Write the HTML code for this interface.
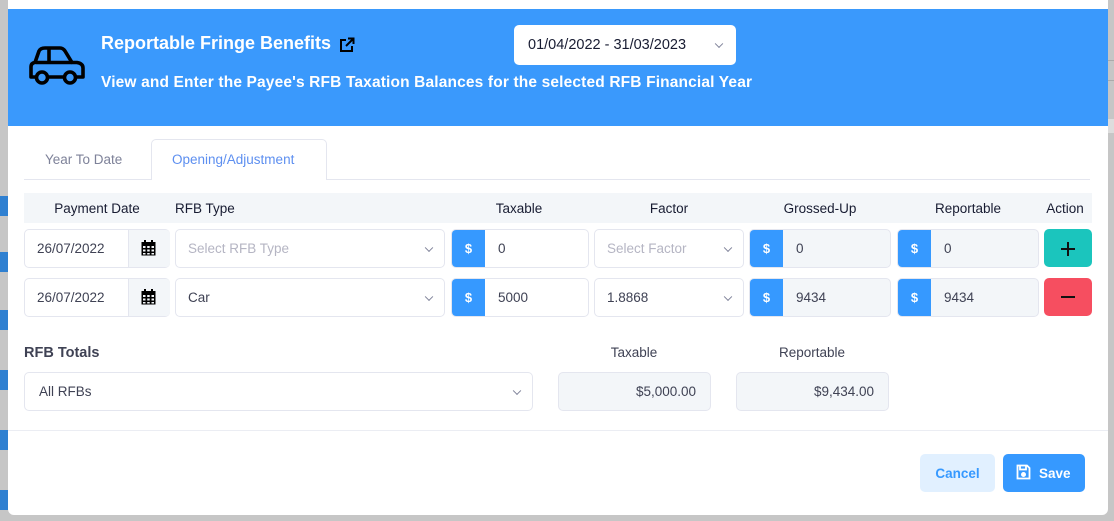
<!DOCTYPE html>
<html><head><meta charset="utf-8"><style>
*{box-sizing:border-box;margin:0;padding:0}
body{width:1114px;height:521px;overflow:hidden;background:#c6c6c6;font-family:"Liberation Sans",sans-serif;position:relative;color:#3f4254}
.a{position:absolute}
.modal{left:8px;top:0;width:1100px;height:515px;background:#fff;border-radius:0 0 6px 6px;overflow:hidden}
.hdr{left:8px;top:9px;width:1100px;height:117px;background:#3a99fc}
.inp{position:absolute;border:1px solid #e4e6ef;border-radius:5px;background:#fff;font-size:13.5px;display:flex;align-items:center;padding-left:12px;color:#3f4254}
.ph{color:#b5b5c3}
.chev{position:absolute;right:12px;top:50%;width:6px;height:6px;border-right:1.3px solid #7e8299;border-bottom:1.3px solid #7e8299;transform:translateY(-70%) rotate(45deg)}
.add{position:absolute;left:0;top:0;bottom:0;width:33px;background:#3699ff;color:#fff;font-size:13px;font-weight:bold;display:flex;align-items:center;justify-content:center;border-radius:4px 0 0 4px}
.lbl{position:absolute;top:201px;font-size:13.5px;color:#181c32;transform:translateX(-50%);white-space:nowrap}
.sidebtn{position:absolute;left:0;width:8px;height:20px;background:#2f80d1}
</style></head><body>
<div class="sidebtn" style="top:196px"></div>
<div class="sidebtn" style="top:252px"></div>
<div class="sidebtn" style="top:310px"></div>
<div class="sidebtn" style="top:370px"></div>
<div class="sidebtn" style="top:430px"></div>
<div class="sidebtn" style="top:490px"></div>
<div class="a" style="left:1108px;top:60px;width:6px;height:1px;background:#aaa"></div>
<div class="a" style="left:1108px;top:80px;width:6px;height:1px;background:#aaa"></div>
<div class="a" style="left:1108px;top:119px;width:6px;height:14px;background:#ddd"></div>
<div class="a modal"></div>
<div class="a hdr"></div>
<svg class="a" style="left:20px;top:35px" width="80" height="60" viewBox="0 0 80 60" fill="none" stroke="#000" stroke-width="3.6" stroke-linejoin="round">
<path d="M16 42 H11 V32 Q11 28 15 27.5 L19 16 Q20.5 13 25 13 H40 Q43 13 45 16 L52 27.5 H57 Q63 28.5 63 33 V42 H56 M44 42 H28"/>
<path d="M16 27.5 H52 M29 13.5 V27.5"/>
<circle cx="22" cy="42.5" r="5.5"/><circle cx="50" cy="42.5" r="5.5"/>
</svg>
<div class="a" style="left:101px;top:33px;color:#fff;font-size:18px;font-weight:bold">Reportable Fringe Benefits</div>
<svg class="a" style="left:339px;top:37px" width="16" height="16" viewBox="0 0 16 16" fill="none" stroke="#000" stroke-width="2"><path d="M7 3H2v11h11V9M9 1.5h5.5V7M14.5 1.5L7 9"/></svg>
<div class="a" style="left:101px;top:74px;color:#fff;font-size:15.5px;font-weight:bold;letter-spacing:0.15px">View and Enter the Payee's RFB Taxation Balances for the selected RFB Financial Year</div>
<div class="inp" style="left:514px;top:25px;width:222px;height:40px;border:none;font-size:14.5px;padding-left:14px;color:#181c32">01/04/2022 - 31/03/2023<span class="chev" style="right:14px"></span></div>
<div class="a" style="left:24px;top:179px;width:1066px;height:1px;background:#e4e6ef"></div>
<div class="a" style="left:151px;top:139px;width:176px;height:41px;background:#fff;border:1px solid #e4e6ef;border-bottom:none;border-radius:5px 5px 0 0"></div>
<div class="a" style="left:45px;top:152px;font-size:13.5px;color:#7e8299">Year To Date</div>
<div class="a" style="left:172px;top:152px;font-size:13.5px;color:#5d8ff0">Opening/Adjustment</div>
<div class="a" style="left:24px;top:193px;width:1068px;height:30px;background:#f3f6f9"></div>
<div class="lbl" style="left:97px">Payment Date</div>
<div class="lbl" style="left:175px;transform:none">RFB Type</div>
<div class="lbl" style="left:519px">Taxable</div>
<div class="lbl" style="left:669px">Factor</div>
<div class="lbl" style="left:820px">Grossed-Up</div>
<div class="lbl" style="left:968px">Reportable</div>
<div class="lbl" style="left:1065px">Action</div>

<div class="inp" style="left:24px;top:229px;width:146px;height:39px">26/07/2022<div class="a" style="left:103px;top:0;bottom:0;width:42px;background:#f3f6f9;border-left:1px solid #e4e6ef;border-radius:0 4px 4px 0"></div></div>
<div class="inp" style="left:175px;top:229px;width:270px;height:39px"><span class="ph">Select RFB Type</span><span class="chev"></span></div>
<div class="inp" style="left:451px;top:229px;width:138px;height:39px;padding-left:46px"><span class="add">$</span>0</div>
<div class="inp" style="left:594px;top:229px;width:150px;height:39px"><span class="ph">Select Factor</span><span class="chev"></span></div>
<div class="inp" style="left:749px;top:229px;width:142px;height:39px;padding-left:46px;background:#f3f6f9"><span class="add">$</span>0</div>
<div class="inp" style="left:897px;top:229px;width:142px;height:39px;padding-left:46px;background:#f3f6f9"><span class="add">$</span>0</div>
<div class="a" style="left:1044px;top:229px;width:48px;height:38px;background:#1bc5bd;border-radius:5px"></div>
<div class="a" style="left:1061px;top:248px;width:14px;height:1.6px;background:#111"></div>
<div class="a" style="left:1067.2px;top:241.5px;width:1.6px;height:14px;background:#111"></div>

<div class="inp" style="left:24px;top:278px;width:146px;height:39px">26/07/2022<div class="a" style="left:103px;top:0;bottom:0;width:42px;background:#f3f6f9;border-left:1px solid #e4e6ef;border-radius:0 4px 4px 0"></div></div>
<div class="inp" style="left:175px;top:278px;width:270px;height:39px">Car<span class="chev"></span></div>
<div class="inp" style="left:451px;top:278px;width:138px;height:39px;padding-left:46px"><span class="add">$</span>5000</div>
<div class="inp" style="left:594px;top:278px;width:150px;height:39px">1.8868<span class="chev"></span></div>
<div class="inp" style="left:749px;top:278px;width:142px;height:39px;padding-left:46px;background:#f3f6f9"><span class="add">$</span>9434</div>
<div class="inp" style="left:897px;top:278px;width:142px;height:39px;padding-left:46px;background:#f3f6f9"><span class="add">$</span>9434</div>
<div class="a" style="left:1044px;top:278px;width:48px;height:38px;background:#f64e60;border-radius:5px"></div>
<div class="a" style="left:1061px;top:296px;width:14px;height:1.6px;background:#111"></div>
<svg class="a" style="left:141px;top:240px" width="15" height="16" viewBox="0 0 15 16"><rect x="0.5" y="2" width="14" height="13.5" fill="#000"/><rect x="3" y="0" width="2" height="3" fill="#000"/><rect x="10" y="0" width="2" height="3" fill="#000"/><g fill="#f3f6f9"><rect x="2" y="6" width="2.5" height="2"/><rect x="6.2" y="6" width="2.5" height="2"/><rect x="10.5" y="6" width="2.5" height="2"/><rect x="2" y="9.5" width="2.5" height="2"/><rect x="6.2" y="9.5" width="2.5" height="2"/><rect x="10.5" y="9.5" width="2.5" height="2"/><rect x="2" y="13" width="2.5" height="1.5"/><rect x="6.2" y="13" width="2.5" height="1.5"/><rect x="10.5" y="13" width="2.5" height="1.5"/></g></svg>
<svg class="a" style="left:141px;top:289px" width="15" height="16" viewBox="0 0 15 16"><rect x="0.5" y="2" width="14" height="13.5" fill="#000"/><rect x="3" y="0" width="2" height="3" fill="#000"/><rect x="10" y="0" width="2" height="3" fill="#000"/><g fill="#f3f6f9"><rect x="2" y="6" width="2.5" height="2"/><rect x="6.2" y="6" width="2.5" height="2"/><rect x="10.5" y="6" width="2.5" height="2"/><rect x="2" y="9.5" width="2.5" height="2"/><rect x="6.2" y="9.5" width="2.5" height="2"/><rect x="10.5" y="9.5" width="2.5" height="2"/><rect x="2" y="13" width="2.5" height="1.5"/><rect x="6.2" y="13" width="2.5" height="1.5"/><rect x="10.5" y="13" width="2.5" height="1.5"/></g></svg>

<div class="a" style="left:24px;top:345px;font-size:14.5px;font-weight:bold;color:#3f4254">RFB Totals</div>
<div class="a" style="left:634px;top:345px;font-size:13.5px;transform:translateX(-50%)">Taxable</div>
<div class="a" style="left:812px;top:345px;font-size:13.5px;transform:translateX(-50%)">Reportable</div>
<div class="inp" style="left:24px;top:372px;width:509px;height:39px;padding-left:14px">All RFBs<span class="chev"></span></div>
<div class="inp" style="left:558px;top:372px;width:153px;height:39px;background:#f3f6f9;justify-content:flex-end;padding-right:14px">$5,000.00</div>
<div class="inp" style="left:736px;top:372px;width:153px;height:39px;background:#f3f6f9;justify-content:flex-end;padding-right:14px">$9,434.00</div>
<div class="a" style="left:8px;top:430px;width:1100px;height:1px;background:#ebedf3"></div>
<div class="a" style="left:920px;top:454px;width:75px;height:38px;background:#e1f0ff;border-radius:5px;color:#3699ff;font-size:13.5px;font-weight:600;display:flex;align-items:center;justify-content:center">Cancel</div>
<div class="a" style="left:1003px;top:454px;width:82px;height:38px;background:#3699ff;border-radius:5px;color:#fff;font-size:13.5px;font-weight:600;display:flex;align-items:center;padding-left:36px">Save</div>
<svg class="a" style="left:1016px;top:464px" width="15" height="16" viewBox="0 0 15 16" fill="none" stroke="#fff" stroke-width="1.8"><path d="M1.5 1.5h9.5l2.5 2.5v10.5h-12z M4 1.5v4h6v-4"/><circle cx="7.5" cy="10.5" r="1.6" fill="#fff"/></svg>
</body></html>
